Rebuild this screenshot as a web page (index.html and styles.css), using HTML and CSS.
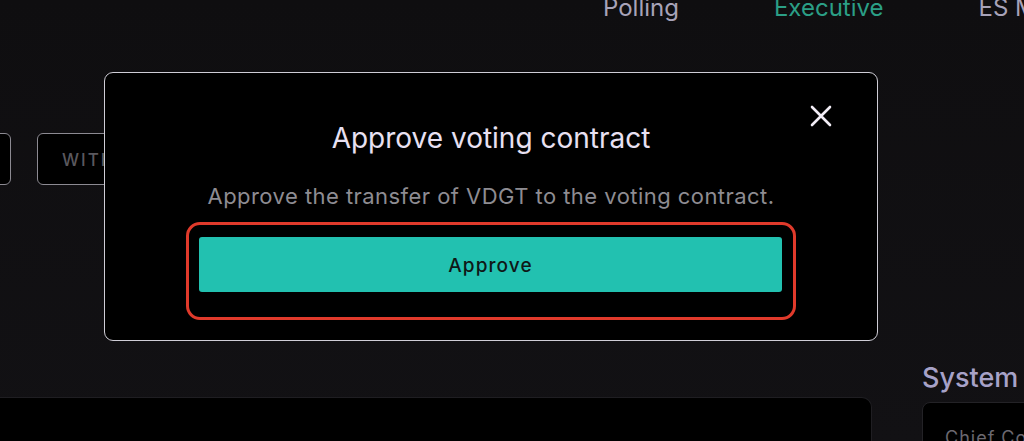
FILE: index.html
```html
<!DOCTYPE html>
<html lang="en">
<head>
    <meta charset="UTF-8">
    <meta name="viewport" content="width=device-width, initial-scale=1.0">
    <title>Executive</title>
    <link rel="stylesheet" href="styles.css">
</head>
<body>
    <div id="page">
        <nav class="topnav">
            <a href="#">Polling</a>
            <a href="#" class="active">Executive</a>
            <a href="#">ES Module</a>
        </nav>
        <div class="toolbar">
            <button class="tool tool-first">DEPOSIT</button>
            <button class="tool">WITHDRAW</button>
        </div>
        <div class="content">
            <section class="panel"></section>
            <aside class="side">
                <h2>System Info</h2>
                <div class="card">Chief Contract</div>
            </aside>
        </div>
    </div>

    <div class="overlay">
        <div class="modal">
            <button class="close" aria-label="Close">
                <svg width="22" height="22" viewBox="0 0 22 22">
                    <path d="M2 2 L20 20 M20 2 L2 20" stroke="currentColor" stroke-width="2.6" stroke-linecap="round"/>
                </svg>
            </button>
            <h1 class="modal-title">Approve voting contract</h1>
            <p class="modal-text">Approve the transfer of VDGT to the voting contract.</p>
            <div class="highlight">
                <button class="approve">Approve</button>
            </div>
        </div>
    </div>
</body>
</html>
```

FILE: styles.css
```css
*{
    margin: 0;
    box-sizing: border-box;
}
:root{
    --fundo:#0f0e10;
    --texto:#a8a3b8;
    --verde:#2b9f86;
    --teal:#22c1b0;
    --vermelho:#e03a2b;
}
html, body{
    background-color: var(--fundo);
    height: 100%;
    overflow: hidden;
    font-family: Inter, "Noto Sans", sans-serif;
}
#page{
    height: 441px;
    overflow: hidden;
    background: linear-gradient(180deg, #0f0e10 0%, #121114 100%);
}
.topnav{
    display: flex;
    gap: 95px;
    padding-left: 603px;
    margin-top: -4px;
    height: 24px;
}
.topnav a{
    color: var(--texto);
    text-decoration: none;
    font-size: 24px;
    line-height: 24px;
    white-space: nowrap;
}
.topnav a.active{
    color: var(--verde);
}
.toolbar{
    display: flex;
    margin-top: 113px;
    gap: 26px;
}
.tool{
    height: 52px;
    width: 150px;
    background: #000;
    border: 1.5px solid #8c8a92;
    border-radius: 6px;
    color: #5a585e;
    font: 500 17px Inter, sans-serif;
    letter-spacing: 2px;
    text-align: left;
    padding-left: 24px;
    padding-top: 3px;
}
.tool-first{
    margin-left: -139px;
}
.content{
    display: grid;
    grid-template-columns: 872px 1fr;
    column-gap: 50px;
    margin-top: 177px;
}
.panel{
    margin-top: 35px;
    height: 60px;
    background: #000;
    border: 1px solid #1f1e22;
    border-left: none;
    border-radius: 0 10px 0 0;
}
.side h2{
    color: #a7a2c8;
    font-size: 27px;
    font-weight: 500;
    line-height: 32px;
    white-space: nowrap;
}
.card{
    margin-top: 8px;
    height: 60px;
    width: 200px;
    background: #000;
    border: 1px solid #232226;
    border-radius: 8px;
    padding: 24px 22px 0;
    color: #6b6870;
    font-size: 18px;
    letter-spacing: 1px;
    white-space: nowrap;
}

/* modal */
.overlay{
    position: absolute;
    inset: 0;
}
.modal{
    position: relative;
    margin: 72px 0 0 104px;
    width: 774px;
    height: 269px;
    background: #000;
    border: 1.5px solid #cfcdd6;
    border-radius: 9px;
    padding: 48px 81px 0 81px;
    display: flex;
    flex-direction: column;
    align-items: stretch;
    text-align: center;
}
.close{
    position: absolute;
    top: 32px;
    right: 45px;
    width: 22px;
    height: 22px;
    padding: 0;
    border: none;
    background: none;
    color: #f2edf6;
    display: grid;
    place-items: center;
}
.modal-title{
    color: #e8e0f2;
    font-size: 28px;
    font-weight: 400;
    line-height: 34px;
}
.modal-text{
    margin-top: 28px;
    color: #8e8c92;
    font-size: 22px;
    line-height: 26px;
    letter-spacing: 0.45px;
    white-space: nowrap;
}
.highlight{
    margin-top: 13px;
    border: 3px solid var(--vermelho);
    border-radius: 14px;
    padding: 12px 11px 25px 10px;
}
.approve{
    display: block;
    width: 100%;
    height: 55px;
    background: var(--teal);
    border: none;
    border-radius: 3px;
    color: #0f1817;
    font: 500 19px Inter, sans-serif;
    letter-spacing: 1.1px;
    padding-top: 3px;
}
```
